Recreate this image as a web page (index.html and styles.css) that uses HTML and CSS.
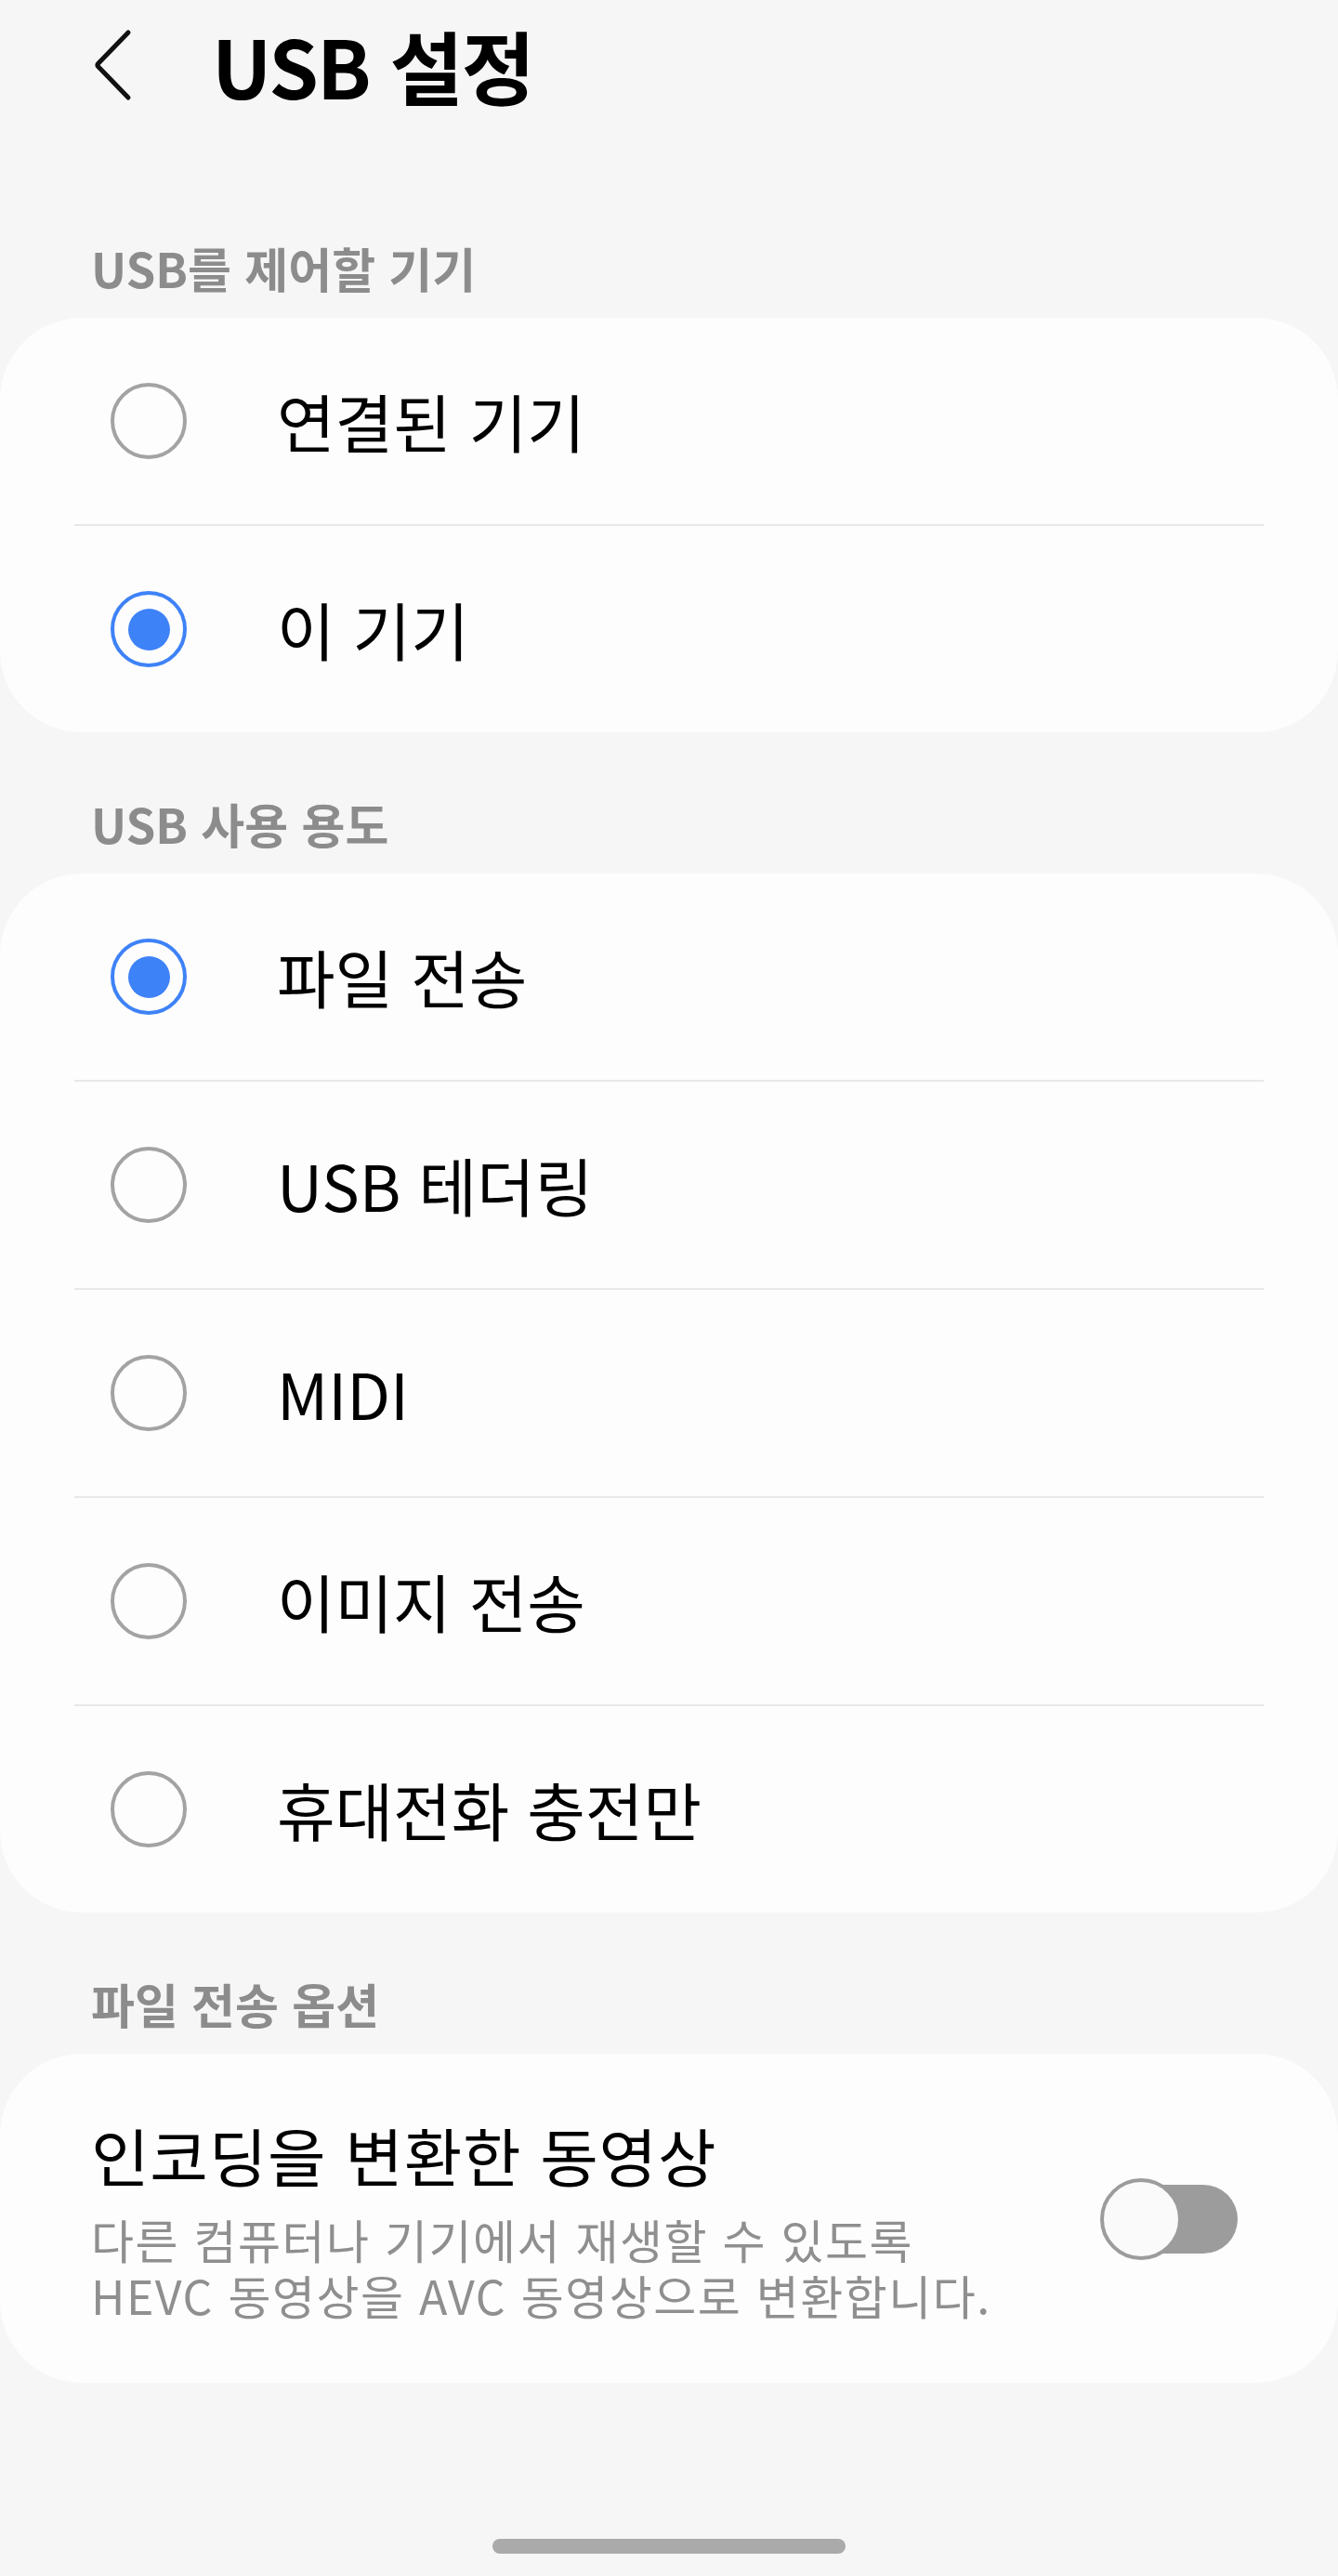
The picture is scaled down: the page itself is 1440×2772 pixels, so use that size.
FILE: index.html
```html
<!DOCTYPE html>
<html lang="ko">
<head>
<meta charset="utf-8">
<title>USB 설정</title>
<link rel="stylesheet" href="styles.css">
</head>
<body>
<div class="screen">
  <header class="appbar">
    <span class="back">
      <svg width="50" height="84" viewBox="0 0 50 84"><path d="M40 7 L8 40 Q6 42 8 44 L40 77" fill="none" stroke="#111" stroke-width="5" stroke-linecap="round" stroke-linejoin="round"/></svg>
    </span>
    <h1 class="title">USB 설정</h1>
  </header>

  <div class="label first">USB를 제어할 기기</div>
  <section class="card">
    <div class="row"><span class="radio"></span><span class="row-text">연결된 기기</span></div>
    <div class="divider"></div>
    <div class="row"><span class="radio on"></span><span class="row-text">이 기기</span></div>
  </section>

  <div class="label">USB 사용 용도</div>
  <section class="card">
    <div class="row"><span class="radio on"></span><span class="row-text">파일 전송</span></div>
    <div class="divider"></div>
    <div class="row"><span class="radio"></span><span class="row-text">USB 테더링</span></div>
    <div class="divider"></div>
    <div class="row"><span class="radio"></span><span class="row-text">MIDI</span></div>
    <div class="divider"></div>
    <div class="row"><span class="radio"></span><span class="row-text">이미지 전송</span></div>
    <div class="divider"></div>
    <div class="row"><span class="radio"></span><span class="row-text">휴대전화 충전만</span></div>
  </section>

  <div class="label">파일 전송 옵션</div>
  <section class="card option">
    <div class="option-text">
      <div class="option-title">인코딩을 변환한 동영상</div>
      <div class="option-sub">
        <div class="sub-line">다른 컴퓨터나 기기에서 재생할 수 있도록</div>
        <div class="sub-line">HEVC 동영상을 AVC 동영상으로 변환합니다.</div>
      </div>
    </div>
    <div class="switch"><span class="track"></span><span class="thumb"></span></div>
  </section>

  <div class="home-bar"></div>
</div>
</body>
</html>
```

FILE: styles.css
```css
html, body {
  margin: 0;
  padding: 0;
  background: #f6f6f6;
}
body {
  font-family: "Noto Sans CJK KR", "Noto Sans", sans-serif;
  color: #000;
}
.screen {
  width: 1440px;
  min-height: 2772px;
  display: flex;
  flex-direction: column;
}
.appbar {
  height: 140px;
  display: flex;
  align-items: center;
  padding-left: 98px;
}
.back {
  width: 50px;
  height: 84px;
  display: flex;
}
.title {
  margin: 0 0 0 80px;
  font-size: 86px;
  font-weight: 700;
  letter-spacing: -2px;
  line-height: 1;
}
.label {
  margin: 68px 0 24px 0;
  padding-left: 98px;
  height: 60px;
  line-height: 60px;
  font-size: 51px;
  font-weight: 700;
  letter-spacing: 0;
  color: #8c8c8c;
}
.label.first {
  margin-top: 118px;
}
.card {
  background: #fdfdfd;
  border-radius: 88px;
  display: flex;
  flex-direction: column;
}
.row {
  height: 222px;
  display: flex;
  align-items: center;
  padding-left: 119px;
}
.divider {
  height: 2px;
  margin: 0 80px;
  background: #e8e8e8;
}
.radio {
  width: 82px;
  height: 82px;
  box-sizing: border-box;
  border: 4px solid #a3a3a3;
  border-radius: 50%;
  display: flex;
  align-items: center;
  justify-content: center;
  flex: none;
}
.radio.on {
  border-color: #3e82f7;
}
.radio.on::after {
  content: "";
  width: 45px;
  height: 45px;
  border-radius: 50%;
  background: #3e82f7;
}
.row-text {
  margin-left: 97px;
  font-size: 68px;
  line-height: 1;
}
.option {
  flex-direction: row;
  align-items: center;
  padding: 67px 108px 65px 98px;
}
.option-text {
  flex: 1;
}
.option-title {
  font-size: 68px;
  line-height: 84px;
  letter-spacing: 0.8px;
}
.option-sub {
  margin-top: 18px;
  color: #8f8f8f;
}
.sub-line {
  height: 60px;
  display: flex;
  align-items: center;
  font-size: 50px;
  line-height: 1;
  letter-spacing: 1.5px;
}
.switch {
  position: relative;
  width: 148px;
  height: 88px;
  flex: none;
}
.track {
  position: absolute;
  left: 8px;
  right: 0;
  top: 7px;
  height: 74px;
  border-radius: 37px;
  background: #9c9c9c;
}
.thumb {
  position: absolute;
  left: 0;
  top: 0;
  width: 88px;
  height: 88px;
  box-sizing: border-box;
  border-radius: 50%;
  border: 4px solid #9c9c9c;
  background: #fafafa;
}
.home-bar {
  align-self: center;
  margin-top: 168px;
  width: 380px;
  height: 16px;
  border-radius: 8px;
  background: #aaaaaa;
}
```
